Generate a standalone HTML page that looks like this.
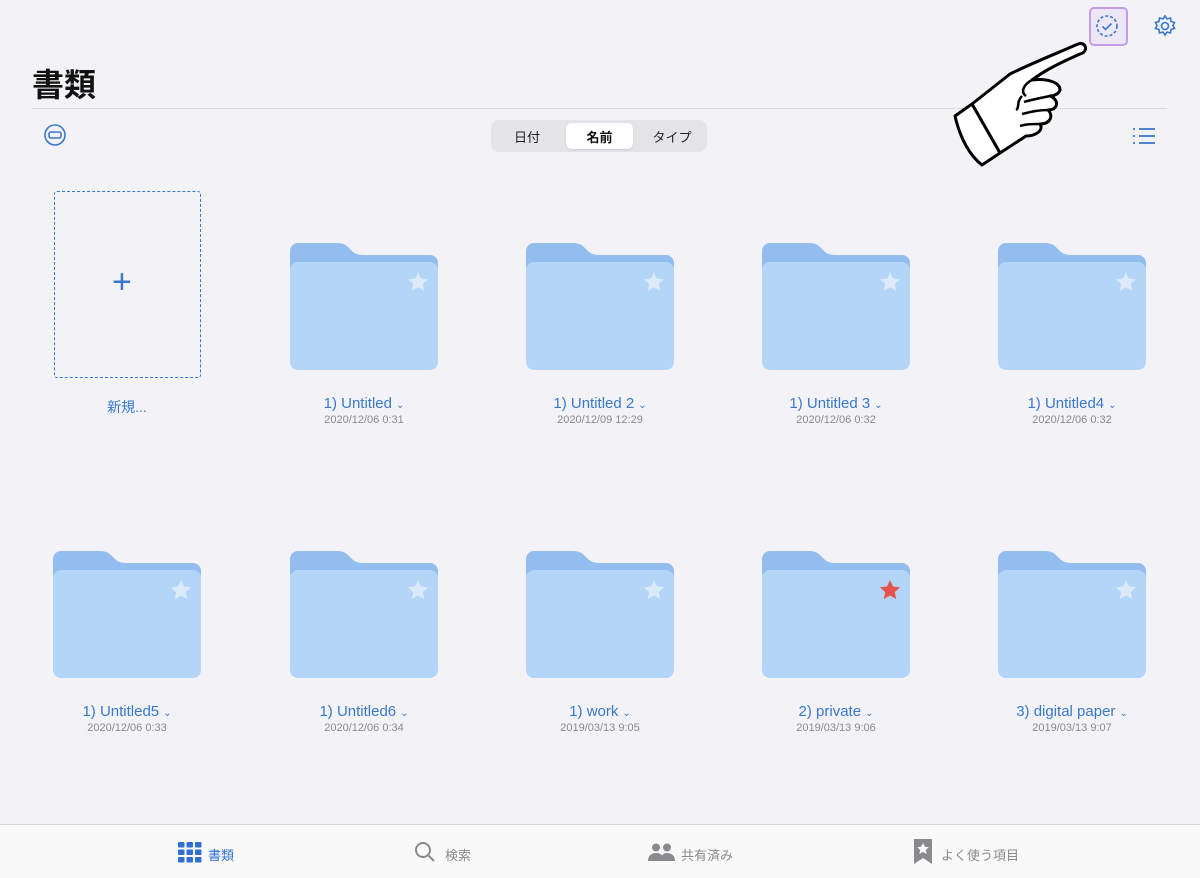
<!DOCTYPE html><html><head><meta charset="utf-8"><style>
body{margin:0;width:1200px;height:877px;background:#f2f2f7;font-family:"Liberation Sans","Noto Sans CJK JP",sans-serif;position:relative;overflow:hidden}
.a{position:absolute}
.f{position:absolute;width:148px;height:127px}
.n{position:absolute;width:236px;text-align:center;color:#3a78c9;font-size:15px}
.d{position:absolute;width:236px;text-align:center;color:#8a8a8e;font-size:11px}
.n span{font-size:10px;margin-left:4px}
</style></head><body>
<div class="a" style="left:32px;top:60px;font-size:32px;font-weight:bold;color:#111">書類</div>
<div class="a" style="left:32px;top:108px;width:1135px;height:1px;background:#dcdce0"></div>
<svg class="a" style="left:43px;top:123px" width="24" height="24"><circle cx="12" cy="12" r="10" fill="none" stroke="#3a78c9" stroke-width="1.6"/><rect x="6" y="9" width="12" height="6" rx="2" fill="none" stroke="#3a78c9" stroke-width="1.6"/></svg>
<div class="a" style="left:491px;top:120px;width:216px;height:32px;background:#e3e3e8;border-radius:8px"></div>
<div class="a" style="left:566px;top:123px;width:67px;height:26px;background:#fff;border-radius:6px;box-shadow:0 1px 2px rgba(0,0,0,.1)"></div>
<div class="a" style="left:491px;top:127px;width:72px;text-align:center;font-size:13px;color:#222">日付</div>
<div class="a" style="left:566px;top:127px;width:67px;text-align:center;font-size:13px;font-weight:bold;color:#111">名前</div>
<div class="a" style="left:636px;top:127px;width:72px;text-align:center;font-size:13px;color:#222">タイプ</div>
<svg class="a" style="left:1132px;top:126px" width="24" height="20" stroke="#3a78c9" stroke-width="1.8"><line x1="1" y1="3" x2="3" y2="3"/><line x1="7" y1="3" x2="23" y2="3"/><line x1="1" y1="10" x2="3" y2="10"/><line x1="7" y1="10" x2="23" y2="10"/><line x1="1" y1="17" x2="3" y2="17"/><line x1="7" y1="17" x2="23" y2="17"/></svg>
<div class="a" style="left:1089px;top:7px;width:35px;height:35px;border:2px solid #c49be8;border-radius:5px;background:#ece6f7"></div>
<svg class="a" style="left:1094px;top:13px" width="26" height="26"><circle cx="13" cy="13" r="10" fill="none" stroke="#3a78c9" stroke-width="1.6" stroke-dasharray="3 2"/><path d="M8.5 13.5l3 3 6-6" fill="none" stroke="#3a78c9" stroke-width="1.6"/></svg>
<svg class="a" style="left:1153px;top:14px" width="24" height="24" fill="none" stroke="#3a78c9" stroke-width="1.6"><circle cx="12" cy="12" r="3.5"/><path d="M12 2l2 3 3.5-1 .5 3.5 3.5 1-1.5 3 1.5 3-3.5 1-.5 3.5-3.5-1-2 3-2-3-3.5 1-.5-3.5-3.5-1 1.5-3-1.5-3 3.5-1 .5-3.5 3.5 1z"/></svg>
<svg class="a" style="left:950px;top:38px" width="140" height="130" fill="#fff" stroke="#000" stroke-width="3" stroke-linejoin="round">
<path d="M22 66L60 36C80 26 110 14 128 6C136 3 139 14 130 16C112 24 95 32 82 42C96 40 110 44 110 52C108 58 100 58 100 58C110 62 108 72 98 72C104 78 100 86 90 86C94 92 86 98 76 98L50 115Z"/>
<path d="M5 78L22 66L50 115L32 127C20 118 10 100 5 78Z"/>
<path d="M82 42C74 46 70 54 76 58M100 58C90 60 80 62 74 64M98 72C88 72 80 74 72 76M90 86C82 86 76 86 70 88M72 58C66 64 70 70 66 72" fill="none" stroke-width="2.5"/></svg>
<div class="a" style="left:54px;top:191px;width:145px;height:185px;border:1.5px dashed #3a78c9;border-radius:3px"></div>
<div class="a" style="left:112px;top:262px;font-size:34px;color:#3a78c9;line-height:40px">+</div>
<div class="n" style="left:9px;top:397px;font-size:14px">新規...</div>
<svg width="0" height="0" style="position:absolute"><defs><g id="fo"><path d="M0 8a8 8 0 0 1 8-8h38c8 0 10 2 14 6s6 6 14 6h66a8 8 0 0 1 8 8v20H0z" fill="#93bdef"/><rect x="0" y="19" width="148" height="108" rx="8" fill="#b3d5f8"/></g><path id="st" d="M10 0l3 6.5 7 .8-5.2 4.8 1.4 7-6.2-3.6-6.2 3.6 1.4-7L0 7.3l7-.8z"/></defs></svg>
<svg class="f" style="left:290px;top:243px"><use href="#fo"/><use href="#st" x="118" y="29" fill="#dce9f8"/></svg>
<svg class="f" style="left:526px;top:243px"><use href="#fo"/><use href="#st" x="118" y="29" fill="#dce9f8"/></svg>
<svg class="f" style="left:762px;top:243px"><use href="#fo"/><use href="#st" x="118" y="29" fill="#dce9f8"/></svg>
<svg class="f" style="left:998px;top:243px"><use href="#fo"/><use href="#st" x="118" y="29" fill="#dce9f8"/></svg>
<div class="n" style="left:246px;top:395px">1) Untitled<span>⌄</span></div><div class="d" style="left:246px;top:414px">2020/12/06 0:31</div>
<div class="n" style="left:482px;top:395px">1) Untitled 2<span>⌄</span></div><div class="d" style="left:482px;top:414px">2020/12/09 12:29</div>
<div class="n" style="left:718px;top:395px">1) Untitled 3<span>⌄</span></div><div class="d" style="left:718px;top:414px">2020/12/06 0:32</div>
<div class="n" style="left:954px;top:395px">1) Untitled4<span>⌄</span></div><div class="d" style="left:954px;top:414px">2020/12/06 0:32</div>
<svg class="f" style="left:53px;top:551px"><use href="#fo"/><use href="#st" x="118" y="29" fill="#dce9f8"/></svg>
<svg class="f" style="left:290px;top:551px"><use href="#fo"/><use href="#st" x="118" y="29" fill="#dce9f8"/></svg>
<svg class="f" style="left:526px;top:551px"><use href="#fo"/><use href="#st" x="118" y="29" fill="#dce9f8"/></svg>
<svg class="f" style="left:762px;top:551px"><use href="#fo"/><use href="#st" x="118" y="29" fill="#e5534b"/></svg>
<svg class="f" style="left:998px;top:551px"><use href="#fo"/><use href="#st" x="118" y="29" fill="#dce9f8"/></svg>
<div class="n" style="left:9px;top:703px">1) Untitled5<span>⌄</span></div><div class="d" style="left:9px;top:722px">2020/12/06 0:33</div>
<div class="n" style="left:246px;top:703px">1) Untitled6<span>⌄</span></div><div class="d" style="left:246px;top:722px">2020/12/06 0:34</div>
<div class="n" style="left:482px;top:703px">1) work<span>⌄</span></div><div class="d" style="left:482px;top:722px">2019/03/13 9:05</div>
<div class="n" style="left:718px;top:703px">2) private<span>⌄</span></div><div class="d" style="left:718px;top:722px">2019/03/13 9:06</div>
<div class="n" style="left:954px;top:703px">3) digital paper<span>⌄</span></div><div class="d" style="left:954px;top:722px">2019/03/13 9:07</div>
<div class="a" style="left:0;top:824px;width:1200px;height:53px;background:#f9f9f9;border-top:1px solid #d8d8dc"></div>
<svg class="a" style="left:178px;top:842px" width="24" height="21" fill="#2f6fd0"><rect x="0" y="0" width="6.5" height="5.5" rx="1"/><rect x="8.5" y="0" width="6.5" height="5.5" rx="1"/><rect x="17" y="0" width="6.5" height="5.5" rx="1"/><rect x="0" y="7.5" width="6.5" height="5.5" rx="1"/><rect x="8.5" y="7.5" width="6.5" height="5.5" rx="1"/><rect x="17" y="7.5" width="6.5" height="5.5" rx="1"/><rect x="0" y="15" width="6.5" height="5.5" rx="1"/><rect x="8.5" y="15" width="6.5" height="5.5" rx="1"/><rect x="17" y="15" width="6.5" height="5.5" rx="1"/></svg>
<div class="a" style="left:208px;top:845px;font-size:13px;color:#2f6fd0">書類</div>
<svg class="a" style="left:414px;top:841px" width="22" height="22" fill="none" stroke="#8a8a8e" stroke-width="2"><circle cx="9" cy="9" r="7"/><line x1="14" y1="14" x2="20" y2="20"/></svg>
<div class="a" style="left:445px;top:845px;font-size:13px;color:#8a8a8e">検索</div>
<svg class="a" style="left:648px;top:843px" width="28" height="18" fill="#8a8a8e"><circle cx="8" cy="4.5" r="4"/><circle cx="19" cy="4.5" r="4"/><path d="M0 18c0-6 4-8 8-8s8 2 8 8zM12 18c1-5 3-8 7-8s8 2 8 8z"/></svg>
<div class="a" style="left:681px;top:845px;font-size:13px;color:#8a8a8e">共有済み</div>
<svg class="a" style="left:914px;top:839px" width="18" height="25" fill="#8a8a8e"><path d="M0 0h18v25l-9-6-9 6z"/><path d="M9 4l1.8 3.8 4 .4-3 2.8.9 4-3.7-2.1-3.7 2.1.9-4-3-2.8 4-.4z" fill="#fff"/></svg>
<div class="a" style="left:941px;top:845px;font-size:13px;color:#8a8a8e">よく使う項目</div>
</body></html>
